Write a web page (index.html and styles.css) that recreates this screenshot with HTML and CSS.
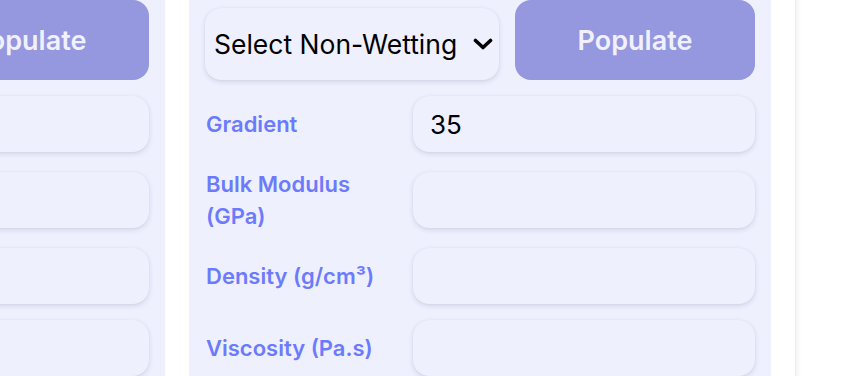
FILE: index.html
```html
<!DOCTYPE html>
<html lang="en">
<head>
<meta charset="utf-8">
<title>Populate</title>
<link rel="stylesheet" href="styles.css">
</head>
<body>
<div class="board">
  <section class="panel">
    <div class="top-row">
      <div class="select-wrap">
        <select class="select"><option>Select Wetting</option></select>
        <svg class="chev" viewBox="0 0 20 12" width="20" height="12"><path d="M2.5 2.5 L10 9.5 L17.5 2.5" fill="none" stroke="#000" stroke-width="3.6" stroke-linecap="round" stroke-linejoin="round"/></svg>
      </div>
      <button class="populate">Populate</button>
    </div>
    <div class="field"><label class="label">Gradient</label><input class="input" type="text" value=""></div>
    <div class="field"><label class="label">Bulk Modulus (GPa)</label><input class="input" type="text" value=""></div>
    <div class="field"><label class="label">Density (g/cm³)</label><input class="input" type="text" value=""></div>
    <div class="field"><label class="label">Viscosity (Pa.s)</label><input class="input" type="text" value=""></div>
  </section>
  <section class="panel">
    <div class="top-row">
      <div class="select-wrap">
        <select class="select"><option>Select Non-Wetting</option></select>
        <svg class="chev" viewBox="0 0 20 12" width="20" height="12"><path d="M2.5 2.5 L10 9.5 L17.5 2.5" fill="none" stroke="#000" stroke-width="3.6" stroke-linecap="round" stroke-linejoin="round"/></svg>
      </div>
      <button class="populate">Populate</button>
    </div>
    <div class="field"><label class="label">Gradient</label><input class="input" type="text" value="35"></div>
    <div class="field"><label class="label">Bulk Modulus (GPa)</label><input class="input" type="text" value=""></div>
    <div class="field"><label class="label">Density (g/cm³)</label><input class="input" type="text" value=""></div>
    <div class="field"><label class="label">Viscosity (Pa.s)</label><input class="input" type="text" value=""></div>
  </section>
  <aside class="side"></aside>
</div>
</body>
</html>
```
FILE: styles.css
```css
* { box-sizing: border-box; }
html, body { margin: 0; padding: 0; background: #ffffff; overflow: hidden; }
body { font-family: Inter, "Open Sans", "Liberation Sans", sans-serif; width: 842px; height: 376px; }

.board {
  display: flex;
  gap: 24px;
  margin-left: -417px;
  align-items: stretch;
  height: 420px;
}

.panel {
  flex: 0 0 582px;
  width: 582px;
  background: #eff0fe;
  padding: 0 16px;
}

.top-row {
  display: flex;
  align-items: flex-end;
  gap: 16px;
  height: 80px;
  margin-bottom: 16px;
}

.select-wrap {
  position: relative;
  width: 294px;
  height: 72px;
}

.select {
  -webkit-appearance: none;
  appearance: none;
  width: 100%;
  height: 100%;
  border: none;
  outline: none;
  border-radius: 16px;
  background: #eff0fe;
  box-shadow: 0 2px 5px rgba(60, 60, 110, 0.16), 0 0 1px rgba(60, 60, 110, 0.12);
  font-family: Inter, "Open Sans", "Liberation Sans", sans-serif;
  font-size: 26.5px;
  color: #000;
  padding: 0 30px 0 9px;
}

.chev {
  position: absolute;
  right: 6px;
  top: 30px;
}

.populate {
  flex: 1;
  height: 80px;
  border: none;
  border-radius: 16px;
  background: #9597df;
  color: #f1f1fe;
  font-family: Inter, "Open Sans", "Liberation Sans", sans-serif;
  font-weight: 600;
  font-size: 27px;
}

.field {
  display: flex;
  align-items: center;
  gap: 16px;
  margin-bottom: 16px;
}

.label {
  flex: 0 0 192px;
  width: 192px;
  color: #6c7bfb;
  font-weight: 600;
  font-size: 22px;
  line-height: 32px;
  padding-left: 1px;
}

.input {
  flex: 1;
  min-width: 0;
  height: 56px;
  border: none;
  outline: none;
  border-radius: 16px;
  background: #eff0fe;
  box-shadow: 0 2px 5px rgba(60, 60, 110, 0.16), 0 0 1px rgba(60, 60, 110, 0.12);
  font-family: Inter, "Open Sans", "Liberation Sans", sans-serif;
  font-size: 26px;
  color: #000;
  padding: 0 17px;
}

.side {
  flex: 1;
  background: linear-gradient(to right, #ececf0 0, #f7f7f9 2px, #ffffff 7px);
}
```
